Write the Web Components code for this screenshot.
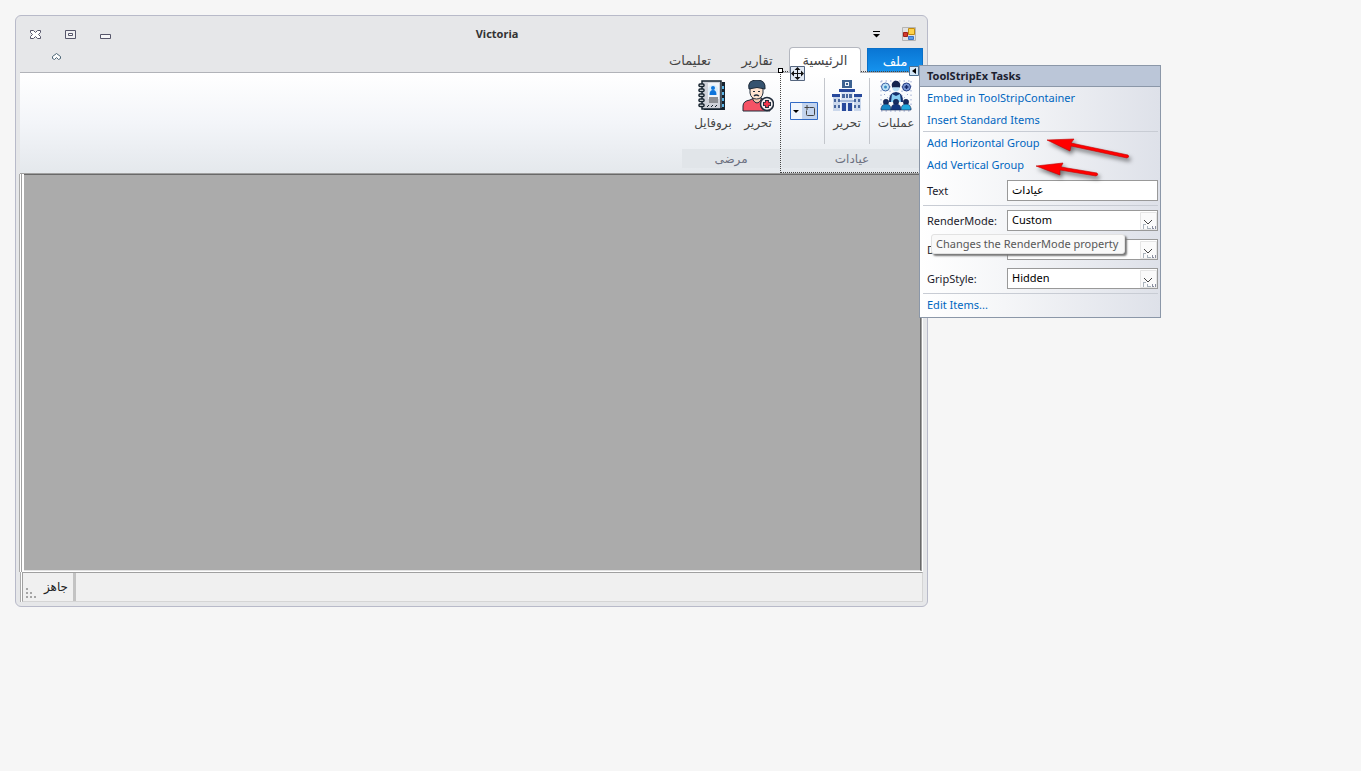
<!DOCTYPE html>
<html lang="ar">
<head>
<meta charset="utf-8">
<title>Victoria</title>
<style>
html,body{margin:0;height:100%;background:#f6f6f6}
body{font:11px/16px "Noto Sans","Open Sans","DejaVu Sans",sans-serif;color:#1e1e1e;padding:15px;box-sizing:border-box;overflow:hidden}
</style>
</head>
<body>
<app-window>
  <title-bar slot="title" caption="Victoria"></title-bar>
  <ribbon-tabs slot="tabs"></ribbon-tabs>
  <ribbon-bar slot="ribbon">
    <ribbon-group label="عيادات" selected>
      <ribbon-item label="عمليات" wide>
        <svg width="32" height="32" viewBox="0 0 32 32">
          <g fill="none" stroke="#9aa8d2" stroke-width="1" stroke-dasharray="1.5 3"><path d="M1 1h30M1 1v30M31 1v30M1 31h30M10 6v14M22 6v14M4 14l7 7M28 14l-7 7"/></g>
          <circle cx="5.500" cy="7" r="4" fill="#bfe3f7" stroke="#3c62a5"/><circle cx="5.500" cy="7" r="1.500" fill="#3c8dc5"/>
          <circle cx="26.500" cy="7" r="4" fill="#7f9bd8" stroke="#223a80"/><path d="M24.500 7h4M26.500 5v4" stroke="#14296b" stroke-width="1.500"/>
          <path d="M9 22q0-10 7-10t7 10" fill="#14306e"/><path d="M11 22l1-8 4 2 4-2 1 8z" fill="#87cdf2"/>
          <circle cx="16" cy="5" r="4.300" fill="#14244f"/><path d="M12.500 6h7v3.500q-3.500 4-7 0z" fill="#b9dff5"/><path d="M12 6.500h8" stroke="#14244f" stroke-width="1.500"/>
          <g stroke="#10224d" stroke-width=".6"><circle cx="6" cy="22" r="2.700" fill="#152b60"/><path d="M1 30q0-6 5-6t5 6z" fill="#1788c9"/><circle cx="16" cy="22" r="2.700" fill="#152b60"/><path d="M11 30q0-6 5-6t5 6z" fill="#12357d"/><circle cx="26" cy="22" r="2.700" fill="#152b60"/><path d="M21 30q0-6 5-6t5 6z" fill="#20a9df"/></g>
        </svg>
      </ribbon-item>
      <ribbon-item label="تحرير">
        <svg width="32" height="32" viewBox="0 0 32 32">
          <path d="M11 0h10v8H11z" fill="#3d6291"/><path d="M14 2h4v4h-4z" fill="#eef4fb"/><path d="M15 3h2v2h-2z" fill="#3d6291"/><path d="M8 9h16v3H8z" fill="#28499c"/>
          <path d="M10 12h12v19H10z" fill="#dce6f4"/><path d="M2 16h7v15H2zM23 16h7v15h-7z" fill="#cbd8ec"/>
          <path d="M1 14h8v3H1zM23 14h8v3h-8z" fill="#28499c"/>
          <path d="M11 14h3v4h-3zM15 14h2v4h-2zM18 14h3v4h-3zM3 19h2v3H3zM7 19h2v3H7zM23 19h2v3h-2zM27 19h2v3h-2zM3 25h2v3H3zM7 25h2v3H7zM23 25h2v3h-2zM27 25h2v3h-2z" fill="#49689f"/>
          <path d="M9 20h14v2H9z" fill="#a5b9da"/><path d="M11 23h4v8h-4zM17 23h4v8h-4z" fill="#28499c"/>
        </svg>
      </ribbon-item>
      <split-button></split-button>
    </ribbon-group>
    <ribbon-group label="مرضى">
      <ribbon-item label="تحرير">
        <svg width="32" height="32" viewBox="0 0 32 32">
          <path d="M1 31v-5q0-5 7-6l4-2h6l5 2q5 3 5 11z" fill="#f65365" stroke="#202c3b"/><path d="M11 16v4q4 6 8 0v-4z" fill="#f1c7ad" stroke="#202c3b"/>
          <path d="M8 7h13v6q-1 6-6.500 6T8 13z" fill="#ffe3cf" stroke="#202c3b"/><path d="M7 9q-2-9 8-9 9 0 8 9-8-3-16 0z" fill="#36536f" stroke="#1c2938"/>
          <path d="M11 11.500h2M16 11.500h2" stroke="#202c3b" fill="none"/><path d="M12 16q2-2 5 0" stroke="#202c3b" fill="none" stroke-width="1.500"/>
          <circle cx="25" cy="24" r="6.500" fill="#f3eef0" stroke="#202c3b" stroke-width="1.500"/><path d="M25 20v8M21 24h8" stroke="#202c3b" stroke-width="4"/><path d="M25 21v6M22 24h6" stroke="#f1364c" stroke-width="2.400"/>
        </svg>
      </ribbon-item>
      <ribbon-item label="بروفايل">
        <svg width="32" height="32" viewBox="0 0 32 32">
          <path d="M25 2h3v28H7v-2h18z" fill="#16232f"/><path d="M26 6v3M26 12v3M26 18v3M26 24v3" stroke="#5eb6e8" stroke-width="2"/>
          <path d="M5 1h19v28H5z" fill="#cfd2da" stroke="#16232f" stroke-width="1.500"/><path d="M11 3h11v16H11z" fill="#f1f5fa"/>
          <circle cx="16" cy="10" r="5" fill="#d9edfb"/><circle cx="16" cy="8" r="2" fill="#0e75dc"/><path d="M12.500 15q0-5 3.500-5t3.500 5z" fill="#0e75dc"/><path d="M12 17h9v6h-9z" fill="#8c8e93"/>
          <path d="M10 27l2-2M14 27l2-2M18 27l2-2" stroke="#16232f"/>
          <g fill="#f5f7fa" stroke="#16232f" stroke-width="1.500"><rect x="2" y="4" width="5" height="2.500" rx="1"/><rect x="2" y="9" width="5" height="2.500" rx="1"/><rect x="2" y="14" width="5" height="2.500" rx="1"/><rect x="2" y="19" width="5" height="2.500" rx="1"/><rect x="2" y="24" width="5" height="2.500" rx="1"/></g>
        </svg>
      </ribbon-item>
    </ribbon-group>
  </ribbon-bar>
  <status-strip slot="status" text="جاهز"></status-strip>
  <tasks-panel slot="overlay" heading="ToolStripEx Tasks"></tasks-panel>
</app-window>

<script>
const define=(name,render)=>customElements.define(name,class extends HTMLElement{
  connectedCallback(){
    if(this.shadowRoot)return;
    this.attachShadow({mode:"open"}).innerHTML=render(this);
  }
});

define("app-window",()=>`<style>
:host{display:flex;flex-direction:column;position:relative;box-sizing:border-box;width:calc(100vw - 448px);height:calc(100vh - 179px);background:#e6e7e9;border:1px solid #b8bac9;border-radius:6px;padding:0 4px 4px}
.mdi{flex:1;box-sizing:border-box;margin-left:-1px;border-left:1px solid #ababab;padding-left:1px;background:#fff;display:flex}
.client{flex:1;background:#ababab;border-top:1px solid #696969;border-right:1px solid #696969;border-bottom:1px solid #e3e3e3;box-shadow:1px 0 #a0a0a0;margin:0 2px 1px 2px}
.edge{width:1px;background:#a0a0a0}
</style>
<slot name="title"></slot><slot name="tabs"></slot><slot name="ribbon"></slot>
<div class="mdi"><div class="edge"></div><div class="client"></div></div>
<slot name="status"></slot><slot name="overlay"></slot>`);

define("title-bar",e=>`<style>
:host{display:flex;align-items:center;direction:rtl;height:32px;padding:4px 7px 0 9px;box-sizing:border-box;flex:none}
h1{flex:1;margin:0;padding-left:10px;font:bold 11px/16px "Noto Sans","Open Sans",sans-serif;text-align:center;color:#333}
button{border:0;background:none;padding:0;display:flex;margin:0}
.controls{display:flex;gap:22px}.quick{margin-right:21px}svg{display:block}
</style>
<svg width="14" height="14" viewBox="0 0 14 14"><path d="M.5.500h13v13H.5z" fill="#e2e2e2" stroke="#b5b5b5"/><path d="M1.500 5.500h4v4h-4z" fill="#d33b2f" stroke="#9e2118"/><path d="M6.500 1.500h6v6h-6z" fill="#ffd24a" stroke="#c08b12"/><path d="M6.500 9.500h5v3h-5z" fill="#5a9bea" stroke="#3b73c4"/></svg>
<button class="quick" aria-label="Customize"><svg width="9" height="8"><path d="M1 1.500h7" stroke="#000"/><path d="M1 4h7L4.500 7.500z"/></svg></button>
<h1>${e.getAttribute("caption")}</h1>
<div class="controls">
<button aria-label="Minimize"><svg width="13" height="11"><path d="M1.500 5.500h10v4h-10z" fill="#f7f7f8" stroke="#56566a"/></svg></button>
<button aria-label="Maximize"><svg width="13" height="11"><path d="M1.500 1.500h10v8h-10z" fill="#f0f0f2" stroke="#56566a"/><path d="M4.500 4.500h4v2h-4z" fill="#fff" stroke="#56566a"/></svg></button>
<button aria-label="Close"><svg width="13" height="11"><path d="M1.500 1.500h3l2 2 2-2h3v2l-2 2 2 2v2h-3l-2-2-2 2h-3v-2l2-2-2-2z" fill="#fff" stroke="#56566a"/></svg></button>
</div>`);

define("ribbon-tabs",()=>`<style>
:host{display:flex;direction:rtl;align-items:flex-end;height:24px;padding-left:31px;flex:none}
nav{display:flex;gap:2px;flex:1;height:24px}
button{font:13px/26px "DejaVu Sans",sans-serif;padding:0;margin:0;border:0;background:none;color:#444;height:24px;white-space:nowrap}
.file{width:56px;color:#fff;background:linear-gradient(#0a76d4,#1593ee);border:1px solid #0a70c8;border-bottom:0;margin-left:4px}
.home{width:72px;background:#fff;border:1px solid #b4b7bf;border-bottom:0;border-radius:4px 4px 0 0;height:26px;margin-top:-1px;position:relative;z-index:1}
.reports{width:60px}.help{width:70px}.collapse{width:11px;display:flex;align-items:center;height:18px;margin-bottom:6px}
</style>
<nav><button class="file">ملف</button><button class="home">الرئيسية</button><button class="reports">تقارير</button><button class="help">تعليمات</button></nav>
<button class="collapse" aria-label="Collapse ribbon"><svg width="11" height="8"><path d="M1.500 5.500v-2l4-3 4 3v2l-2 1-2-2-2 2z" fill="#fff" stroke="#4b6475"/></svg></button>`);

define("ribbon-bar",()=>`<style>
:host{display:flex;direction:rtl;height:102px;box-sizing:border-box;border-top:1px solid #b1b3b8;border-bottom:1px solid #a0a0a0;background:linear-gradient(#fff,#f3f5f9 50%,#e4e8ec);padding-right:1px;flex:none}
</style><slot></slot>`);

define("ribbon-group",e=>`<style>
:host{display:flex;flex-direction:column;position:relative;padding-top:5px;min-width:98px;--rule:transparent}
:host([selected]){--rule:#c3c6cc}
.items{display:flex;height:71px}
.label{height:19px;font:12px/21px "DejaVu Sans",sans-serif;text-align:center;color:#6c7080;background:#e1e5e9}
:host([selected]) .label{margin-left:2px}
.outline{position:absolute;inset:-2px -2px 0 0;border:1px dotted #444;border-right:0;pointer-events:none}
.sizer{position:absolute;left:-2px;top:-5px;width:3px;height:3px;background:#fff;border:1px solid #000}
.move{position:absolute;left:10px;top:-7px;z-index:2}
.tag{position:absolute;right:3px;top:-7px;z-index:2}
</style><div class="items"><slot></slot></div><div class="label">${e.getAttribute("label")}</div>
${e.hasAttribute("selected")?`<div class="outline"></div><div class="sizer"></div>
<svg class="move" width="15" height="15"><path d="M.5.500h14v14H.5z" fill="#e2e9f4" stroke="#55657e"/><path d="M7.500 2v11M2 7.500h11" stroke="#111"/><path d="M7.500 1l3 3h-6zM7.500 14l3-3h-6zM1 7.500l3-3v6zM14 7.500l-3-3v6z" fill="#111"/></svg>
<svg class="tag" width="10" height="10"><path d="M.5.500h9v9H.5z" fill="#d4e8f8" stroke="#4a6f91"/><path d="M7 2v6L3 5z"/></svg>`:""}`);

define("ribbon-item",e=>`<style>
:host{display:block;width:45px;box-sizing:border-box;border-left:1px solid var(--rule);height:66px}
:host([wide]){width:53px}
button{width:100%;margin:0;padding:2px 0 0;border:0;background:none;display:flex;flex-direction:column;align-items:center;font:12px/18px "DejaVu Sans",sans-serif;color:#444;white-space:nowrap;gap:2px}
</style><button><slot></slot><span>${e.getAttribute("label")}</span></button>`);

define("split-button",()=>`<style>
:host{display:block;padding:24px 6px 0 10px}
button{display:block;padding:0;border:0;background:none;margin:0}svg{display:block}
</style><button aria-label="Add item"><svg width="28" height="18"><path d="M.5.500h27v17H.5z" fill="#f0f5fc" stroke="#316ac5"/><path d="M12 1h15v16H12z" fill="#c3d4ee"/><path d="M3 8h6l-3 3z"/><path d="M19.500 5.500h4q1 0 1 1v6q0 1-1 1h-6q-1 0-1-1v-4M14.500 5.500h5M17 3v5" fill="none" stroke="#444"/></svg></button>`);

define("status-strip",e=>`<style>
:host{display:flex;box-sizing:border-box;height:30px;border:1px solid #a0a0a0;border-right-color:#d5d5d5;border-bottom-color:#d5d5d5;margin-left:2px;background:#f0f0f0;flex:none;box-shadow:-1px 0 #fff,-2px 0 #ababab}
svg{align-self:flex-end;margin:0 7px 2px 3px;flex:none}
span{font:12px/28px "DejaVu Sans",sans-serif;color:#222;border-right:3px solid #c3c3c3;padding-right:5px;direction:rtl;width:24px;white-space:nowrap;display:block}
</style><svg width="11" height="11"><path d="M0 0h2v2H0zM0 4h2v2H0zM4 4h2v2H4zM0 8h2v2H0zM4 8h2v2H4zM8 8h2v2H8z" fill="#a5a5a5"/></svg><span>${e.getAttribute("text")}</span>`);

define("task-link",()=>`<style>
:host{display:block;line-height:22px;padding-left:4px}
a{color:#0066bf;text-decoration:none}
</style><a href="#"><slot></slot></a>`);

define("task-field",e=>`<style>
:host{display:flex;align-items:center;height:29px;padding-left:4px}
label{width:80px;flex:none;color:#1b1b2b}
.box{flex:1;position:relative;display:flex;min-width:0}
input,select{appearance:none;flex:1;min-width:0;width:100%;height:21px;box-sizing:border-box;border:1px solid #999;border-radius:0;background:#fff;margin:0;padding:0 4px 2px;font:11px/16px "Noto Sans","Open Sans","DejaVu Sans",sans-serif;color:#000}
svg{position:absolute;right:1px;top:2px;pointer-events:none}
</style><label for="f">${e.getAttribute("label")}</label><div class="box">${
e.hasAttribute("text")?`<input id="f" value="${e.getAttribute("value")}">`:
`<select id="f"><option>${e.getAttribute("value")}</option></select><svg width="17" height="18"><path d="M.5.500h16v17H.5z" fill="#fafafa" stroke="#e5e5e5"/><path d="M4 8l4 4 4-4" fill="none" stroke="#444"/><path d="M3.500 12v5M3 12.500h3M7.500 14v3M8 16.500h3" stroke="#aab4bd"/><path d="M12.500 14v3M15.500 14v3M12 16.500h4" stroke="#8b8fa0" stroke-dasharray="2 1"/></svg>`}</div>`);

define("hover-tip",()=>`<style>
:host{display:block;background:#f9f9f9;border:1px solid #e2e2e2;border-radius:3px;box-shadow:2px 2px 2px #777;color:#575757;padding:0 6px 0 4px;line-height:18px;white-space:nowrap}
</style><slot></slot>`);

define("tasks-panel",e=>`<style>
:host{display:block;position:absolute;left:calc(100% - 8px);top:49px;width:242px;box-sizing:border-box;border:1px solid #8b97a8;background:linear-gradient(90deg,#fff,#f5f6f8 35%,#dee1e9);z-index:5;padding-bottom:1px}
h2{margin:0;background:#bbc6d8;border-bottom:1px solid #8b97a8;font:bold 11px/20px "Noto Sans","Open Sans",sans-serif;padding-left:7px;color:#1b2130}
.body{padding:0 2px 0 3px}
hr{border:0;height:1px;background:#c8ccd4;margin:0}
hover-tip{position:absolute;left:11px;top:168px}
.arrows{position:absolute;left:115px;top:66px;pointer-events:none;overflow:visible;filter:drop-shadow(2px 3px 2px #0008)}
</style><h2>${e.getAttribute("heading")}</h2><div class="body">
<task-link>Embed in ToolStripContainer</task-link><task-link>Insert Standard Items</task-link><hr>
<task-link>Add Horizontal Group</task-link><task-link>Add Vertical Group</task-link>
<task-field label="Text" value="عيادات" text></task-field><hr>
<task-field label="RenderMode:" value="Custom"></task-field><task-field label="D" value=""></task-field><task-field label="GripStyle:" value="Hidden"></task-field><hr>
<task-link>Edit Items...</task-link></div>
<hover-tip role="tooltip">Changes the RenderMode property</hover-tip>
<svg class="arrows" width="96" height="48"><g fill="red" stroke="#c00000" stroke-width=".6"><path d="M12 8l27-1-3 4 57 12q2 2-1 3L36 14l-1 5z"/><path d="M1 34l27-3-2 4 36 6q2 2-1 3l-36-6v5z"/></g></svg>`);
</script>
</body>
</html>
